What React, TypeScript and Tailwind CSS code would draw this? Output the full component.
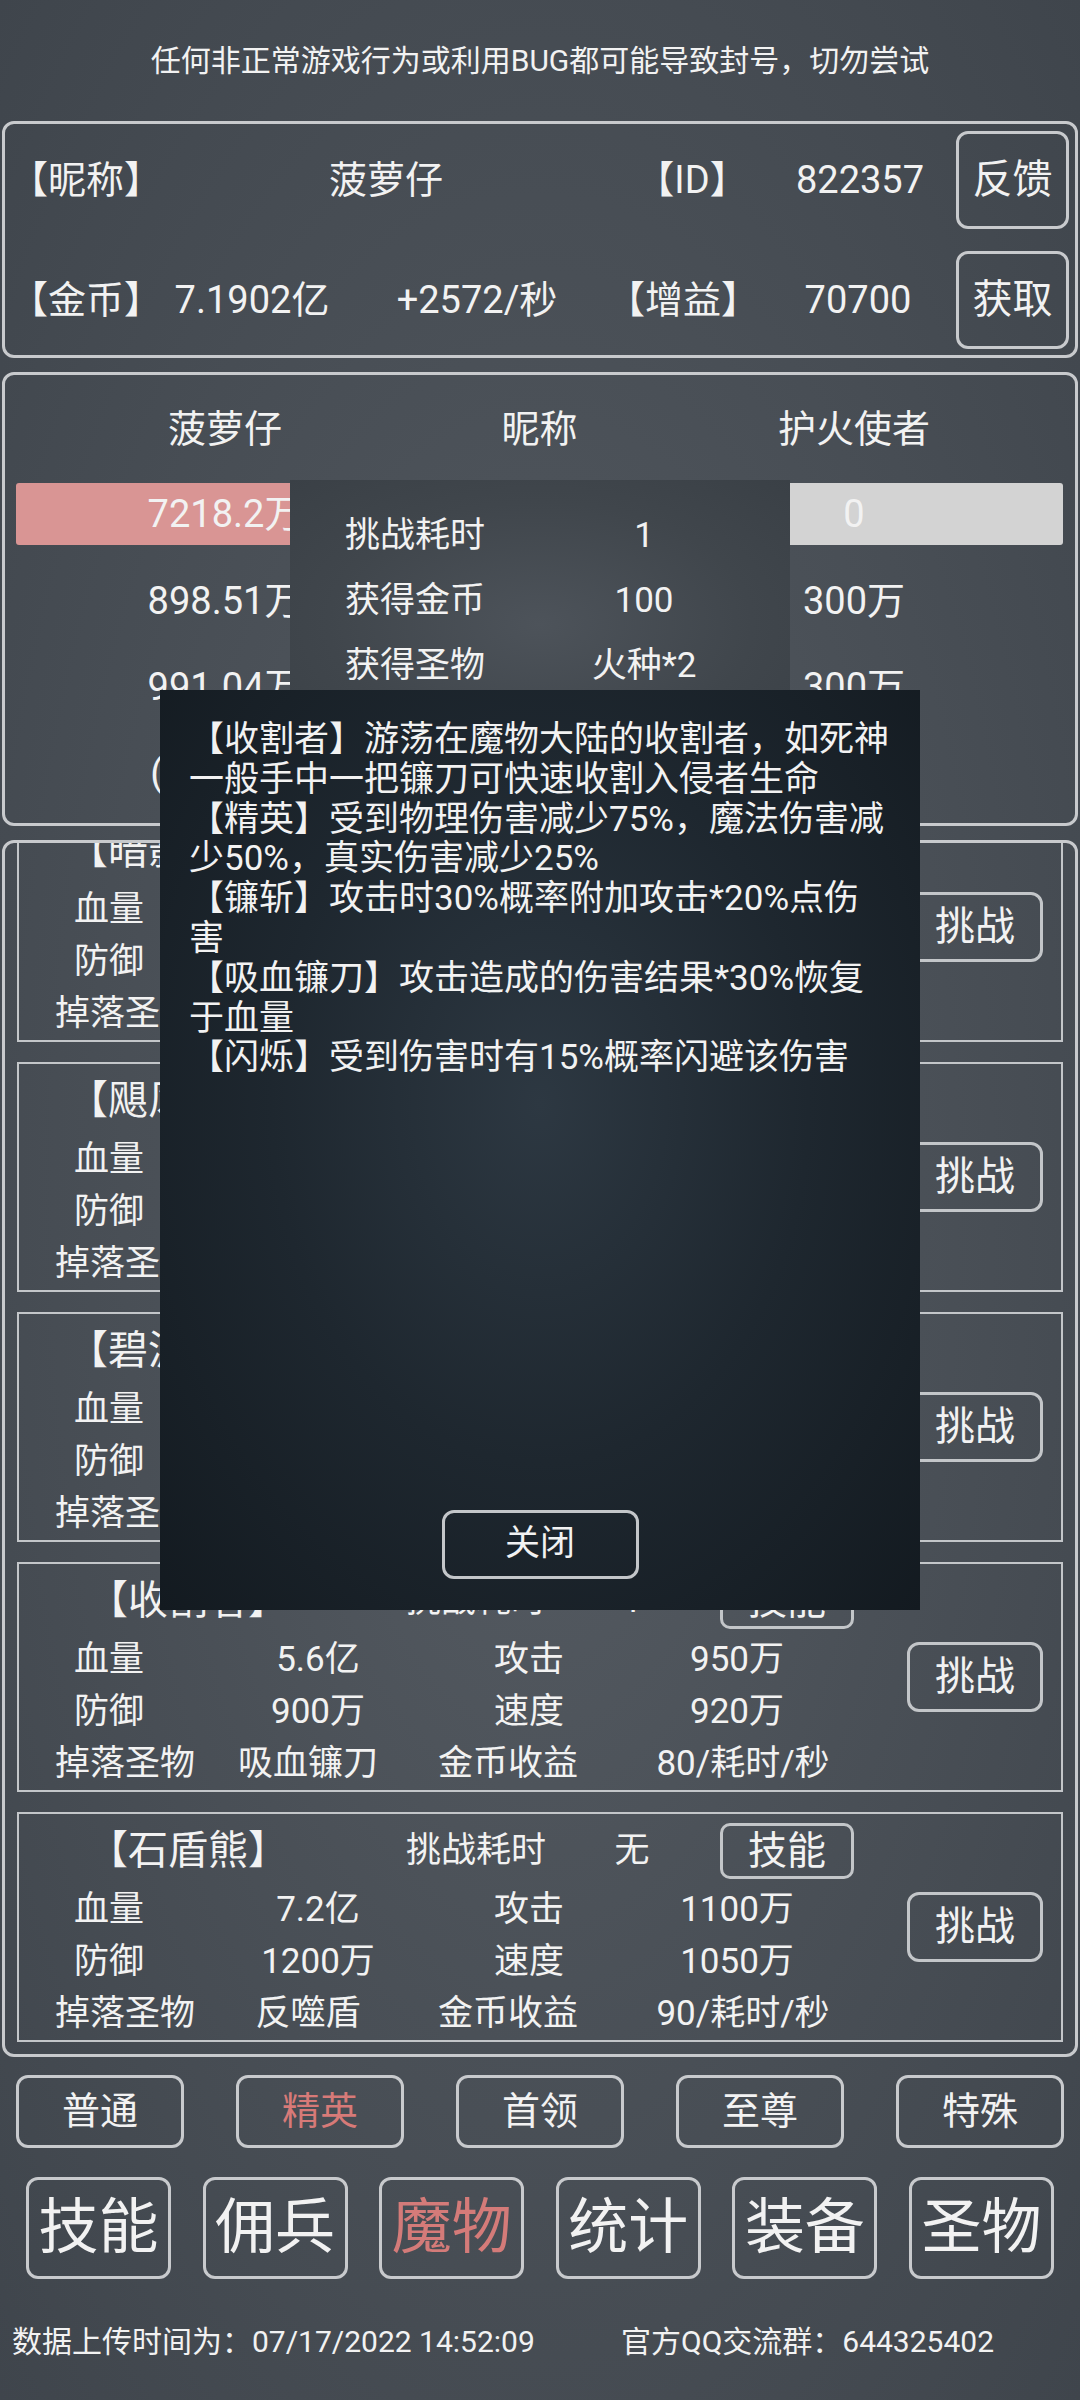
import React from "react";

type Monster = {
  name: string;
  time: string;
  hp: string;
  atk: string;
  def: string;
  spd: string;
  drop: string;
  gold: string;
};

const monsters: Monster[] = [
  { name: "暗影刺客", time: "1", hp: "3.2亿", atk: "620万", def: "600万", spd: "640万", drop: "暗影之刃", gold: "60/耗时/秒" },
  { name: "飓风狼王", time: "1", hp: "3.8亿", atk: "720万", def: "700万", spd: "760万", drop: "风暴之眼", gold: "65/耗时/秒" },
  { name: "碧波海妖", time: "1", hp: "4.6亿", atk: "840万", def: "800万", spd: "850万", drop: "海妖之歌", gold: "70/耗时/秒" },
  { name: "收割者", time: "1", hp: "5.6亿", atk: "950万", def: "900万", spd: "920万", drop: "吸血镰刀", gold: "80/耗时/秒" },
  { name: "石盾熊", time: "无", hp: "7.2亿", atk: "1100万", def: "1200万", spd: "1050万", drop: "反噬盾", gold: "90/耗时/秒" },
];

function Card({ m }: { m: Monster }) {
  return (
    <div className="flex h-[230px] w-[1046px] shrink-0 border-2 border-[#c3c6c9]">
      <div className="flex flex-col">
        <div className="mt-[8px] flex h-[58px] items-center">
          <div className="w-[338px] whitespace-nowrap text-center text-[40px]">【{m.name}】</div>
          <div className="w-[238px] text-center text-[35px]">挑战耗时</div>
          <div className="w-[74px] text-center text-[35px]">{m.time}</div>
          <div className="ml-[51px] flex h-[56px] w-[134px] items-center justify-center rounded-[10px] border-[3px] border-[#c3c6c9] text-[39px]">
            技能
          </div>
        </div>
        <div className="mt-[4px] flex h-[52px] items-center text-[35px]">
          <div className="w-[180px] text-center">血量</div>
          <div className="w-[238px] text-center">{m.hp}</div>
          <div className="w-[184px] text-center">攻击</div>
          <div className="w-[232px] text-center">{m.atk}</div>
        </div>
        <div className="flex h-[52px] items-center text-[35px]">
          <div className="w-[180px] text-center">防御</div>
          <div className="w-[238px] text-center">{m.def}</div>
          <div className="w-[184px] text-center">速度</div>
          <div className="w-[232px] text-center">{m.spd}</div>
        </div>
        <div className="flex h-[52px] items-center text-[35px]">
          <div className="w-[212px] whitespace-nowrap text-center">掉落圣物</div>
          <div className="w-[154px] whitespace-nowrap text-center">{m.drop}</div>
          <div className="w-[246px] whitespace-nowrap text-center">金币收益</div>
          <div className="w-[224px] whitespace-nowrap text-center">{m.gold}</div>
        </div>
      </div>
      <div className="ml-auto flex items-center pr-[18px]">
        <div className="flex h-[70px] w-[136px] items-center justify-center rounded-[12px] border-[3px] border-[#c3c6c9] text-[40px]">
          挑战
        </div>
      </div>
    </div>
  );
}

export default function App() {
  const tabs = ["普通", "精英", "首领", "至尊", "特殊"];
  const nav = ["技能", "佣兵", "魔物", "统计", "装备", "圣物"];
  const modalLines = [
    "【收割者】游荡在魔物大陆的收割者，如死神",
    "一般手中一把镰刀可快速收割入侵者生命",
    "【精英】受到物理伤害减少75%，魔法伤害减",
    "少50%，真实伤害减少25%",
    "【镰斩】攻击时30%概率附加攻击*20%点伤",
    "害",
    "【吸血镰刀】攻击造成的伤害结果*30%恢复",
    "于血量",
    "【闪烁】受到伤害时有15%概率闪避该伤害",
  ];

  return (
    <div className="relative h-[2400px] w-[1080px] overflow-hidden bg-[radial-gradient(ellipse_at_50%_50%,#575d64_0%,#4a5057_50%,#3f454c_100%)] font-['Roboto','Noto_Sans_CJK_SC',sans-serif] text-[#f2f2f2]">
      {/* warning */}
      <div className="flex h-[121px] items-center justify-center text-[30px]">
        任何非正常游戏行为或利用BUG都可能导致封号，切勿尝试
      </div>

      {/* panel 1 */}
      <div className="mx-[2px] flex h-[237px] flex-col rounded-[12px] border-[3px] border-[#c8cacd]">
        <div className="flex h-[112px] items-center text-[38px]">
          <div className="ml-[5px] w-[146px] whitespace-nowrap">【昵称】</div>
          <div className="w-[460px] text-center">菠萝仔</div>
          <div className="w-[152px] whitespace-nowrap text-center">【ID】</div>
          <div className="w-[184px] text-center">822357</div>
          <div className="ml-[4px] flex h-[98px] w-[113px] items-center justify-center rounded-[12px] border-[3px] border-[#c8cacd] text-[40px]">
            反馈
          </div>
        </div>
        <div className="mt-[9px] flex h-[110px] items-center text-[38px]">
          <div className="ml-[5px] w-[146px] whitespace-nowrap">【金币】</div>
          <div className="w-[192px] whitespace-nowrap text-center">7.1902亿</div>
          <div className="w-[258px] whitespace-nowrap text-center">+2572/秒</div>
          <div className="w-[154px] whitespace-nowrap text-center">【增益】</div>
          <div className="w-[196px] text-center">70700</div>
          <div className="flex h-[98px] w-[113px] items-center justify-center rounded-[12px] border-[3px] border-[#c8cacd] text-[40px]">
            获取
          </div>
        </div>
      </div>

      {/* panel 2 */}
      <div className="mx-[2px] mt-[14px] flex h-[454px] flex-col rounded-[12px] border-[3px] border-[#c8cacd] pl-[11px] text-[38px]">
        <div className="grid h-[108px] grid-cols-[418px_211px_418px] items-center">
          <div className="text-center">菠萝仔</div>
          <div className="text-center">昵称</div>
          <div className="text-center">护火使者</div>
        </div>
        <div className="grid h-[62px] grid-cols-[418px_211px_418px] items-center">
          <div className="flex h-[62px] items-center justify-center rounded-[3px] bg-[#d99594]">7218.2万</div>
          <div className="text-center">血量</div>
          <div className="flex h-[62px] items-center justify-center rounded-[3px] bg-[#d3d3d3]">0</div>
        </div>
        <div className="mt-[13px] grid h-[86px] grid-cols-[418px_211px_418px] items-center">
          <div className="text-center">898.51万</div>
          <div className="text-center">攻击</div>
          <div className="text-center">300万</div>
        </div>
        <div className="grid h-[86px] grid-cols-[418px_211px_418px] items-center">
          <div className="text-center">991.04万</div>
          <div className="text-center">防御</div>
          <div className="text-center">300万</div>
        </div>
        <div className="grid h-[86px] grid-cols-[418px_211px_418px] items-center">
          <div className="text-center">(+18.5%)</div>
          <div className="text-center">暴击</div>
          <div className="text-center"></div>
        </div>
      </div>

      {/* panel 3: monster list (scrolled) */}
      <div className="mx-[2px] mt-[14px] h-[1217px] overflow-hidden rounded-[12px] border-[3px] border-[#c8cacd]">
        <div className="mt-[-31px] flex flex-col gap-[20px] pl-[12px]">
          {monsters.map((m) => (
            <Card key={m.name} m={m} />
          ))}
        </div>
      </div>

      {/* tabs */}
      <div className="mt-[18px] flex h-[73px] justify-between px-[16px]">
        {tabs.map((t) => (
          <div
            key={t}
            className={
              "flex h-[73px] w-[168px] items-center justify-center rounded-[12px] border-[3px] border-[#c8cacd] text-[38px] " +
              (t === "精英" ? "text-[#d77a78]" : "")
            }
          >
            {t}
          </div>
        ))}
      </div>

      {/* nav */}
      <div className="mt-[29px] flex h-[102px] justify-between px-[26px]">
        {nav.map((t) => (
          <div
            key={t}
            className={
              "flex h-[102px] w-[145px] items-center justify-center rounded-[12px] border-[3px] border-[#c8cacd] text-[60px] " +
              (t === "魔物" ? "text-[#d47b79]" : "")
            }
          >
            {t}
          </div>
        ))}
      </div>

      {/* footer */}
      <div className="mt-[42px] flex h-[40px] items-center whitespace-nowrap pl-[12px] text-[30px]">
        <div className="w-[609px]">数据上传时间为：07/17/2022 14:52:09</div>
        <div>官方QQ交流群：644325402</div>
      </div>

      {/* tooltip overlay */}
      <div className="absolute left-[290px] top-[480px] h-[240px] w-[500px] bg-[radial-gradient(ellipse_at_50%_60%,#4d535a_0%,#40464c_60%,#3a4046_100%)] pt-[24px] text-[35px]">
        <div className="flex h-[65px] items-center">
          <div className="ml-[55px] w-[200px]">挑战耗时</div>
          <div className="ml-[24px] w-[150px] text-center">1</div>
        </div>
        <div className="flex h-[65px] items-center">
          <div className="ml-[55px] w-[200px]">获得金币</div>
          <div className="ml-[24px] w-[150px] text-center">100</div>
        </div>
        <div className="flex h-[65px] items-center">
          <div className="ml-[55px] w-[200px]">获得圣物</div>
          <div className="ml-[24px] w-[150px] text-center">火种*2</div>
        </div>
      </div>

      {/* modal */}
      <div className="absolute left-[160px] top-[690px] flex h-[920px] w-[760px] flex-col bg-[radial-gradient(ellipse_at_50%_45%,#2d3842_0%,#1e272f_50%,#131a20_100%)] pb-[31px] pl-[29px] pt-[30px]">
        <div className="text-[35px] leading-[39.8px]">
          {modalLines.map((l, i) => (
            <div key={i} className="whitespace-nowrap">
              {l}
            </div>
          ))}
        </div>
        <div className="mt-auto flex justify-center pr-[29px]">
          <div className="flex h-[69px] w-[197px] items-center justify-center rounded-[12px] border-[3px] border-[#c3c6c9] text-[35px]">
            关闭
          </div>
        </div>
      </div>
    </div>
  );
}
